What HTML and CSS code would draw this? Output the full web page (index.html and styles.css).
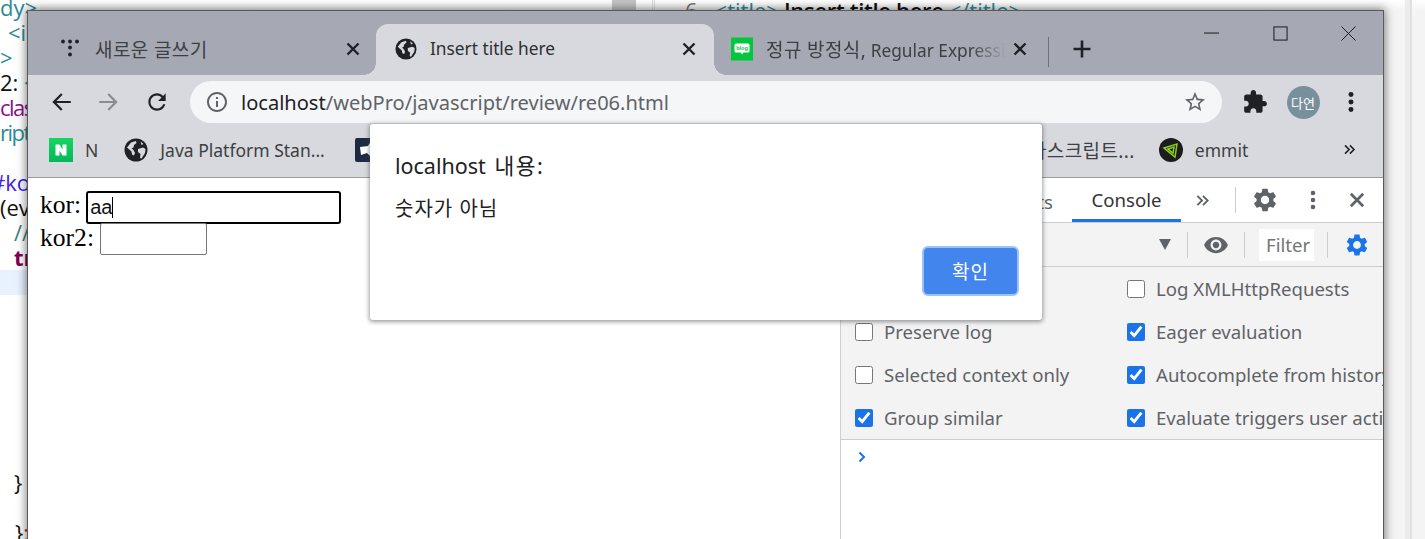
FILE: index.html
```html
<!DOCTYPE html>
<html lang="ko">
<head>
<meta charset="utf-8">
<title>Insert title here</title>
<link rel="stylesheet" href="styles.css">
</head>
<body>
<svg class="defs" aria-hidden="true">
  <symbol id="globe" viewBox="0 0 24 24"><circle cx="12" cy="12" r="11.5" fill="#202124"/><path fill="#d8d9de" d="M3 9.5l4-5 5-1.5.5 2-2.5 2-.5 2.5-2 1 2 1.5 1.5 3-1 2.500-2-1-.5-3zM14 11l5-1.500 2.500 1.500-.5 4-3.500 5.500-1.500-.5.5-4-2.500-2zM16.500 3.500l3 2.500-2 1z"/></symbol>
  <symbol id="gear" viewBox="0 0 24 24"><path d="M19.14 12.94c.04-.3.06-.61.06-.94 0-.32-.02-.64-.07-.94l2.03-1.58c.18-.14.23-.41.12-.61l-1.92-3.32c-.12-.22-.37-.29-.59-.22l-2.39.96c-.5-.38-1.03-.7-1.62-.94l-.36-2.54c-.04-.24-.24-.41-.48-.41h-3.84c-.24 0-.43.17-.47.41l-.36 2.54c-.59.24-1.13.57-1.62.94l-2.39-.96c-.22-.08-.47 0-.59.22L2.74 8.87c-.12.21-.08.47.12.61l2.03 1.58c-.05.3-.09.63-.09.94s.02.64.07.94l-2.03 1.58c-.18.14-.23.41-.12.61l1.92 3.32c.12.22.37.29.59.22l2.39-.96c.5.38 1.03.7 1.62.94l.36 2.54c.05.24.24.41.48.41h3.84c.24 0 .44-.17.47-.41l.36-2.54c.59-.24 1.13-.56 1.62-.94l2.39.96c.22.08.47 0 .59-.22l1.92-3.32c.12-.22.07-.47-.12-.61l-2.01-1.58zM12 15.6c-1.98 0-3.6-1.62-3.6-3.6s1.62-3.6 3.6-3.6 3.6 1.62 3.6 3.6-1.62 3.6-3.6 3.6z"/></symbol>
  <symbol id="close" viewBox="0 0 16 16"><path d="M2.500 2.500l11 11M13.500 2.500l-11 11" fill="none" stroke="currentColor" stroke-width="2.400"/></symbol>
  <symbol id="dots" viewBox="0 0 24 24"><circle cx="12" cy="5" r="2.300"/><circle cx="12" cy="12" r="2.300"/><circle cx="12" cy="19" r="2.300"/></symbol>
  <symbol id="chev" viewBox="0 0 16 16"><path d="M2.500 3l5 5-5 5M8.500 3l5 5-5 5" fill="none" stroke="currentColor" stroke-width="2"/></symbol>
</svg>

<div class="backdrop">
  <div class="code-left">
    <div class="ln teal">dy&gt;</div>
    <div class="ln teal in1">&lt;i</div>
    <div class="ln teal">&gt;</div>
    <div class="ln"><span class="blk">2:</span> <span class="teal">&lt;</span></div>
    <div class="ln purple tight">clas</div>
    <div class="ln teal tight">ript</div>
    <div class="ln">&nbsp;</div>
    <div class="ln blue neg-hash">#ko</div>
    <div class="ln blk">(ev</div>
    <div class="ln green in2">//</div>
    <div class="ln maroon in2">tr</div>
    <div class="ln hl">&nbsp;</div>
    <div class="ln">&nbsp;</div><div class="ln">&nbsp;</div><div class="ln">&nbsp;</div><div class="ln">&nbsp;</div>
    <div class="ln">&nbsp;</div><div class="ln">&nbsp;</div><div class="ln">&nbsp;</div>
    <div class="ln blk in2">}</div>
    <div class="ln">&nbsp;</div>
    <div class="ln blk in3">}<span class="red">;</span></div>
  </div>
  <div class="code-top">
    <span class="sb"></span><span class="rule"></span>
    <span class="num">6</span><span class="teal">&lt;title&gt;</span> <span class="blk strong">Insert title here</span> <span class="teal">&lt;/title&gt;</span>
  </div>
  <div class="right-rule"></div>
</div>

<main class="window">
  <div class="strip">
    <div class="tab t1">
      <svg class="fav" viewBox="0 0 22 22"><circle cx="3" cy="3.500" r="1.900"/><circle cx="10" cy="3.500" r="1.900"/><circle cx="17" cy="3.500" r="1.900"/><circle cx="10" cy="9.500" r="1.900"/><circle cx="10" cy="16.500" r="1.900"/></svg>
      <span class="tab-title ko">새로운 글쓰기</span>
      <svg class="x"><use href="#close"/></svg>
    </div>
    <div class="tab t2 active">
      <svg class="fav"><use href="#globe"/></svg>
      <span class="tab-title">Insert title here</span>
      <svg class="x"><use href="#close"/></svg>
    </div>
    <div class="tab t3">
      <svg class="fav" viewBox="0 0 22 22"><rect width="22" height="23" y="-.5" fill="#00c73c"/><path d="M5 5.500h12a1.500 1.500 0 0 1 1.500 1.500v6a1.500 1.500 0 0 1-1.500 1.500h-4.500L11 16.500l-1.500-2H5A1.500 1.500 0 0 1 3.500 13V7A1.500 1.500 0 0 1 5 5.500z" fill="#fff"/><text class="blog" x="11" y="12">blog</text></svg>
      <span class="tab-title fade"><span class="ko">정규 방정식,</span> Regular Expression</span>
      <svg class="x"><use href="#close"/></svg>
    </div>
    <span class="tab-sep"></span>
    <svg class="plus" viewBox="0 0 20 20"><path d="M10 1.500v17M1.500 10h17" stroke="#202124" stroke-width="2.600"/></svg>
    <div class="win-controls">
      <span class="wc"><svg viewBox="0 0 16 16"><path d="M0 7.500h16" stroke="#111" fill="none"/></svg></span>
      <span class="wc"><svg viewBox="0 0 16 16"><rect x="1" y="1" width="14" height="14" stroke="#111" fill="none"/></svg></span>
      <span class="wc"><svg viewBox="0 0 16 16"><path d="M.5.500l15 15M15.500.500l-15 15" stroke="#111" fill="none"/></svg></span>
    </div>
  </div>

  <div class="toolbar">
    <span class="tbtn"><svg viewBox="0 0 24 24"><path d="M21 11H7.830l5.590-5.590L12 4l-8 8 8 8 1.410-1.410L7.830 13H21z"/></svg></span>
    <span class="tbtn dim"><svg viewBox="0 0 24 24"><path d="M3 11h13.170l-5.590-5.590L12 4l8 8-8 8-1.410-1.410L16.170 13H3z"/></svg></span>
    <span class="tbtn"><svg viewBox="0 0 24 24"><path d="M17.650 6.350C16.200 4.900 14.210 4 12 4c-4.420 0-7.990 3.580-7.990 8s3.570 8 7.990 8c3.730 0 6.840-2.550 7.730-6h-2.080c-.82 2.330-3.040 4-5.650 4-3.310 0-6-2.690-6-6s2.690-6 6-6c1.660 0 3.140.690 4.220 1.780L13 11h7V4l-2.350 2.350z"/></svg></span>
    <div class="omnibox">
      <svg class="o-icon" viewBox="0 0 24 24"><path d="M11 7h2v2h-2zm0 4h2v6h-2zm1-9C6.480 2 2 6.480 2 12s4.480 10 10 10 10-4.480 10-10S17.520 2 12 2zm0 18c-4.410 0-8-3.590-8-8s3.590-8 8-8 8 3.590 8 8-3.590 8-8 8z"/></svg>
      <span class="url"><b>localhost</b>/webPro/javascript/review/re06.html</span>
      <svg class="o-icon" viewBox="0 0 24 24"><path d="M22 9.240l-7.190-.620L12 2 9.190 8.630 2 9.240l5.460 4.730L5.820 21 12 17.270 18.180 21l-1.630-7.030L22 9.240zM12 15.400l-3.760 2.270 1-4.280-3.320-2.880 4.380-.380L12 6.100l1.710 4.040 4.380.380-3.320 2.880 1 4.280L12 15.400z"/></svg>
    </div>
    <span class="tbtn first-r"><svg viewBox="0 0 24 24"><path d="M20.500 11H19V7c0-1.100-.9-2-2-2h-4V3.500C13 2.120 11.880 1 10.500 1S8 2.120 8 3.500V5H4c-1.100 0-1.990.9-1.990 2v3.800H3.500c1.490 0 2.700 1.210 2.700 2.700s-1.210 2.700-2.700 2.700H2V20c0 1.100.9 2 2 2h3.800v-1.500c0-1.490 1.210-2.700 2.700-2.700 1.490 0 2.700 1.210 2.700 2.700V22H17c1.100 0 2-.9 2-2v-4h1.500c1.380 0 2.500-1.120 2.500-2.500S21.880 11 20.500 11z"/></svg></span>
    <span class="tbtn"><span class="avatar">다연</span></span>
    <span class="tbtn"><svg><use href="#dots"/></svg></span>
  </div>

  <div class="bookmarks">
    <span class="bm b-n"><svg class="bm-ic" viewBox="0 0 24 24"><defs><linearGradient id="ng" x1="0" y1="0" x2="0" y2="1"><stop offset="0" stop-color="#16d65f"/><stop offset="1" stop-color="#03b85a"/></linearGradient></defs><rect width="24" height="24" fill="url(#ng)"/><path d="M6.500 6.500h4l3 5v-5h4v11h-4l-3-5v5h-4z" fill="#fff"/></svg>N</span>
    <span class="bm b-java"><svg class="bm-ic"><use href="#globe"/></svg>Java Platform Stan...</span>
    <span class="bm b-js"><svg class="bm-ic" viewBox="0 0 24 24"><rect width="24" height="24" rx="2" fill="#1e2a44"/><path d="M5 9l8-1 3-5 1 6 6 2-6 3-1 5-4-4-6 2z" fill="#fff"/></svg><span class="bm-long ko">자바스크립트...</span></span>
    <span class="bm b-em"><svg class="bm-ic" viewBox="0 0 24 24"><circle cx="12" cy="12" r="12" fill="#1c1c1c"/><path d="M5 10l13-4-2 13zM9 11l6-2-1 6z" fill="none" stroke="#8ecb1f" stroke-width="1.500"/></svg>emmit</span>
    <svg class="bm-more"><use href="#chev"/></svg>
  </div>

  <div class="content">
    <div class="page">
      <div class="row"><span class="lbl">kor:</span><div class="field focus"><span class="val">aa</span><span class="caret"></span></div></div>
      <div class="row"><span class="lbl l2">kor2:</span><input class="field small" type="text" aria-label="kor2"></div>
    </div>
    <aside class="devtools">
      <div class="dt-tabs">
        <span class="dt-tab first">Elements</span>
        <span class="dt-tab on">Console</span>
        <svg class="dt-more"><use href="#chev"/></svg>
        <span class="dt-sep"></span>
        <svg class="dt-gear"><use href="#gear"/></svg>
        <svg class="dt-dots"><use href="#dots"/></svg>
        <svg class="dt-x"><use href="#close"/></svg>
      </div>
      <div class="dt-bar">
        <span class="tri"></span>
        <span class="bar-sep"></span>
        <svg class="eye" viewBox="0 0 24 24"><path d="M12 4.500C7 4.500 2.730 7.610 1 12c1.730 4.390 6 7.500 11 7.500s9.270-3.110 11-7.500c-1.730-4.390-6-7.500-11-7.500zM12 17c-2.760 0-5-2.240-5-5s2.240-5 5-5 5 2.240 5 5-2.240 5-5 5zm0-8c-1.660 0-3 1.340-3 3s1.340 3 3 3 3-1.340 3-3-1.340-3-3-3z"/></svg>
        <span class="bar-sep"></span>
        <span class="filter">Filter</span>
        <span class="bar-sep"></span>
        <svg class="bar-gear"><use href="#gear"/></svg>
      </div>
      <div class="dt-settings">
        <label class="opt"><input type="checkbox">Hide network</label>
        <label class="opt"><input type="checkbox">Log XMLHttpRequests</label>
        <label class="opt"><input type="checkbox">Preserve log</label>
        <label class="opt"><input type="checkbox" checked>Eager evaluation</label>
        <label class="opt"><input type="checkbox">Selected context only</label>
        <label class="opt"><input type="checkbox" checked>Autocomplete from history</label>
        <label class="opt"><input type="checkbox" checked>Group similar</label>
        <label class="opt"><input type="checkbox" checked>Evaluate triggers user activation</label>
      </div>
      <div class="prompt"><svg viewBox="0 0 12 12"><path d="M3.500 1.500L8 6l-4.500 4.500" fill="none" stroke="#1a73e8" stroke-width="2"/></svg></div>
    </aside>
  </div>

  <div class="dialog" role="alertdialog">
    <div class="d-title">localhost <span class="d-ko">내용:</span></div>
    <div class="d-msg">숫자가 아님</div>
    <div class="d-actions"><button class="d-ok">확인</button></div>
  </div>
</main>
</body>
</html>
```
FILE: styles.css
```css
* { box-sizing: border-box; }
html, body { margin: 0; height: 100%; overflow: hidden; background: #fff; }
body { font-family: "Noto Sans", "Noto Sans CJK KR", sans-serif; color: #202124; position: relative; }
.defs { position: absolute; width: 0; height: 0; }

/* window behind */
.backdrop { position: absolute; inset: 0; background: linear-gradient(#fff, #f4f4f4 10px); overflow: hidden; }
.code-left { position: absolute; left: 0; top: -5px; width: 40px; font: 22px/25px "Open Sans", "Noto Sans", sans-serif; white-space: nowrap; background: #fff; overflow: hidden; }
.ln { height: 25px; }
.hl { background: #e8f2fe; }
.in1 { padding-left: 8px; }
.in2 { padding-left: 14px; }
.in3 { padding-left: 15px; }
.tight { letter-spacing: -1.500px; }
.neg-hash { margin-left: -9px; }
.teal { color: #2a8c95; }
.blk { color: #111; }
.strong { font-weight: 600; letter-spacing: -.3px; }
.purple { color: #8b0f88; }
.blue { color: #3a22f0; }
.green { color: #3f7f7f; }
.maroon { color: #7f0055; font-weight: 700; }
.red { color: #c33; }
.code-top { position: absolute; left: 612px; top: -2px; height: 24px; display: flex; align-items: center; gap: 5px; font: 22px/24px "Open Sans", sans-serif; white-space: pre; }
.sb { width: 24px; height: 30px; background: #c4c4c4; margin-right: 11px; }
.rule { width: 3px; height: 30px; border-left: 1px solid #ddd; border-right: 1px solid #ddd; margin-right: 25px; }
.num { color: #777; margin-right: 12px; }
.right-rule { position: absolute; left: 1405px; top: 0; width: 7px; height: 100%; background: #ececec; border-right: 2px solid #e0e0e0; }

/* browser window */
.window { position: absolute; left: 27px; top: 10px; width: 1357px; height: 600px; border: 1px solid #5a5a5a; box-shadow: 0 0 9px 1px rgba(0,0,0,.5); background: #fff; display: flex; flex-direction: column; }
.strip { height: 64px; flex: none; background: #a6a9b4; display: flex; align-items: flex-end; padding-left: 16px; position: relative; }
.tab { height: 51px; display: flex; align-items: center; font-size: 17.300px; position: relative; flex: none; color: #3c4043; padding-bottom: 2px !important; }
.ko { font-size: 19px; letter-spacing: .4px; }
.t1 { width: 332px; padding: 0 15px 0 16px; }
.t2 { width: 338px; padding: 0 17px 0 19px; }
.t3 { width: 334px; padding: 0 20px 0 17px; }
.active { background: #d8d9de; border-radius: 12px 12px 0 0; color: #2c2f33; }
.active::before, .active::after { content: ""; position: absolute; bottom: 0; width: 12px; height: 12px; }
.active::before { left: -12px; background: radial-gradient(circle at 0 0, transparent 11.500px, #d8d9de 12px); }
.active::after { right: -12px; background: radial-gradient(circle at 100% 0, transparent 11.500px, #d8d9de 12px); }
.fav { width: 22px; height: 22px; margin-right: 13px; flex: none; fill: #202124; overflow: visible; }
.blog { font: 700 5.500px "Liberation Sans", sans-serif; fill: #00c73c; text-anchor: middle; }
.tab-title { flex: 1; min-width: 0; white-space: nowrap; overflow: hidden; }
.fade { margin-right: 6px; -webkit-mask-image: linear-gradient(to right, #000 85%, transparent); mask-image: linear-gradient(to right, #000 85%, transparent); }
.x { width: 16px; height: 16px; flex: none; color: #202124; }
.tab-sep { width: 1px; height: 30px; background: #6f727a; align-self: center; margin-top: 18px; flex: none; }
.plus { width: 20px; height: 20px; margin: 0 0 16px 23px; flex: none; }
.win-controls { margin-left: auto; align-self: flex-start; display: flex; }
.wc { width: 68.500px; height: 44px; display: flex; align-items: center; justify-content: center; }
.wc svg { width: 15px; height: 15px; }

.toolbar { height: 50px; flex: none; background: #d8d9de; display: flex; align-items: flex-start; padding: 6px 8px 0 9px; }
.tbtn { width: 48px; height: 42px; flex: none; display: flex; align-items: center; justify-content: center; }
.tbtn svg { width: 26px; height: 26px; fill: #202124; }
.tbtn.dim svg { fill: #8a8c92; }
.first-r { margin-left: 9px; }
.omnibox { flex: 1; height: 42px; margin-left: 9px; background: #f5f6f8; border-radius: 21px; display: flex; align-items: center; padding: 0 15px; gap: 12px; }
.o-icon { width: 24px; height: 24px; flex: none; fill: #5f6368; }
.url { flex: 1; font-size: 20.060px; color: #5f6368; white-space: nowrap; }
.url b { font-weight: 400; color: #202124; }
.avatar { width: 33px; height: 33px; border-radius: 50%; background: #78909c; color: #fff; font-size: 13px; display: flex; align-items: center; justify-content: center; }

.bookmarks { height: 53px; flex: none; background: #d8d9de; border-bottom: 1px solid #9b9ca1; display: flex; align-items: center; padding: 0 0 2px 21px; font-size: 17.500px; color: #3c4043; position: relative; }
.bm { display: flex; align-items: center; white-space: nowrap; flex: none; }
.bm-ic { width: 24px; height: 24px; margin-right: 12px; flex: none; }
.b-n { margin-right: 26px; }
.b-java { margin-right: 30px; }
.b-js { width: 780px; }
.bm-long { flex: 1; text-align: right; }
.b-em { margin-left: 24px; }
.bm-more { width: 13px; height: 13px; position: absolute; right: 27px; top: 18px; color: #202124; }

.content { flex: 1; min-height: 0; display: flex; }
.page { width: 812px; flex: none; padding: 13px 0 0 12px; font: 25.600px/32px "Liberation Serif", serif; color: #000; }
.row { display: flex; align-items: center; gap: 5px; height: 32px; }
.lbl { padding-bottom: 4px; }
.l2 { padding-bottom: 2px; margin-right: 1px; }
.field { display: block; height: 33px; background: #fff; border: 1px solid #767676; border-radius: 2px; font: 20px "Liberation Sans", sans-serif; padding: 0; }
.focus { width: 255px; border: 2px solid #000; border-radius: 3px; display: flex; align-items: center; padding-left: 2px; color: #111; }
.caret { width: 1px; height: 21px; background: #000; }
.small { width: 107px; height: 32px; }

.devtools { flex: 1; min-width: 0; border-left: 1px solid #cfcfcf; font-size: 18.600px; color: #5f6368; overflow: hidden; }
.dt-tabs { height: 45px; display: flex; align-items: center; background: #fff; border-bottom: 1px solid #cbcdd1; position: relative; }
.dt-tab { height: 44px; display: flex; align-items: center; flex: none; padding-top: 2px; }
.first { width: 212px; justify-content: flex-end; }
.on { width: 109px; margin-left: 19px; justify-content: center; color: #333; border-bottom: 3px solid #1a73e8; }
.dt-more { width: 15px; height: 15px; margin-left: 14px; color: #5f6368; flex: none; }
.dt-sep { width: 1px; height: 26px; background: #cbcdd1; margin-left: 25px; flex: none; }
.dt-gear { width: 28px; height: 28px; fill: #5f6368; margin-left: 15px; flex: none; }
.dt-dots { width: 24px; height: 24px; fill: #5f6368; margin-left: 22px; flex: none; }
.dt-x { width: 18px; height: 18px; color: #5f6368; margin-left: 23px; flex: none; }
.dt-bar { height: 44px; background: #f3f3f3; border-bottom: 1px solid #cbcdd1; display: flex; align-items: center; justify-content: flex-end; padding-right: 13px; }
.tri { width: 0; height: 0; border: 6px solid transparent; border-top: 11px solid #5f6368; border-bottom: 0; margin-right: 16px; }
.bar-sep { width: 1px; height: 26px; background: #cbcdd1; }
.eye { width: 26px; height: 26px; fill: #5f6368; margin: 0 15px 0 15px; }
.filter { width: 55px; height: 32px; margin: 0 13px 0 14px; background: #fff; padding-left: 7px; line-height: 32px; color: #757575; }
.bar-gear { width: 26px; height: 26px; fill: #1a73e8; margin-left: 16px; }
.dt-settings { height: 173px; background: #f3f3f3; border-bottom: 1px solid #cbcdd1; display: grid; grid-template-columns: 272px 272px; grid-auto-rows: 43px; padding: 0 0 0 14px; overflow: hidden; }
.opt { display: flex; align-items: center; gap: 11px; white-space: nowrap; }
.opt input { width: 18px; height: 18px; margin: 0; accent-color: #1a73e8; flex: none; }
.prompt { height: 36px; padding: 11px 0 0 15px; }
.prompt svg { width: 12px; height: 12px; display: block; }

/* modal alert over the page */
.dialog { position: absolute; left: 342px; top: 113px; width: 672px; height: 196px; background: #fff; border-radius: 3px; box-shadow: 0 1px 4px 1px rgba(60,64,67,.5); padding: 27px 23px 0 25px; display: flex; flex-direction: column; color: #202124; }
.d-title { font-size: 21.500px; line-height: 30px; word-spacing: 3px; }
.d-ko { letter-spacing: 1.500px; }
.d-msg { font-size: 20px; letter-spacing: 1px; line-height: 26px; margin-top: 15px; }
.d-actions { display: flex; justify-content: flex-end; margin-top: 24px; }
.d-ok { width: 97px; height: 50px; background: #4285ec; border: 2px solid #9cc2f8; border-radius: 6px; color: #fff; font: 19px "Noto Sans", "Noto Sans CJK KR", sans-serif; letter-spacing: 1px; }
```
